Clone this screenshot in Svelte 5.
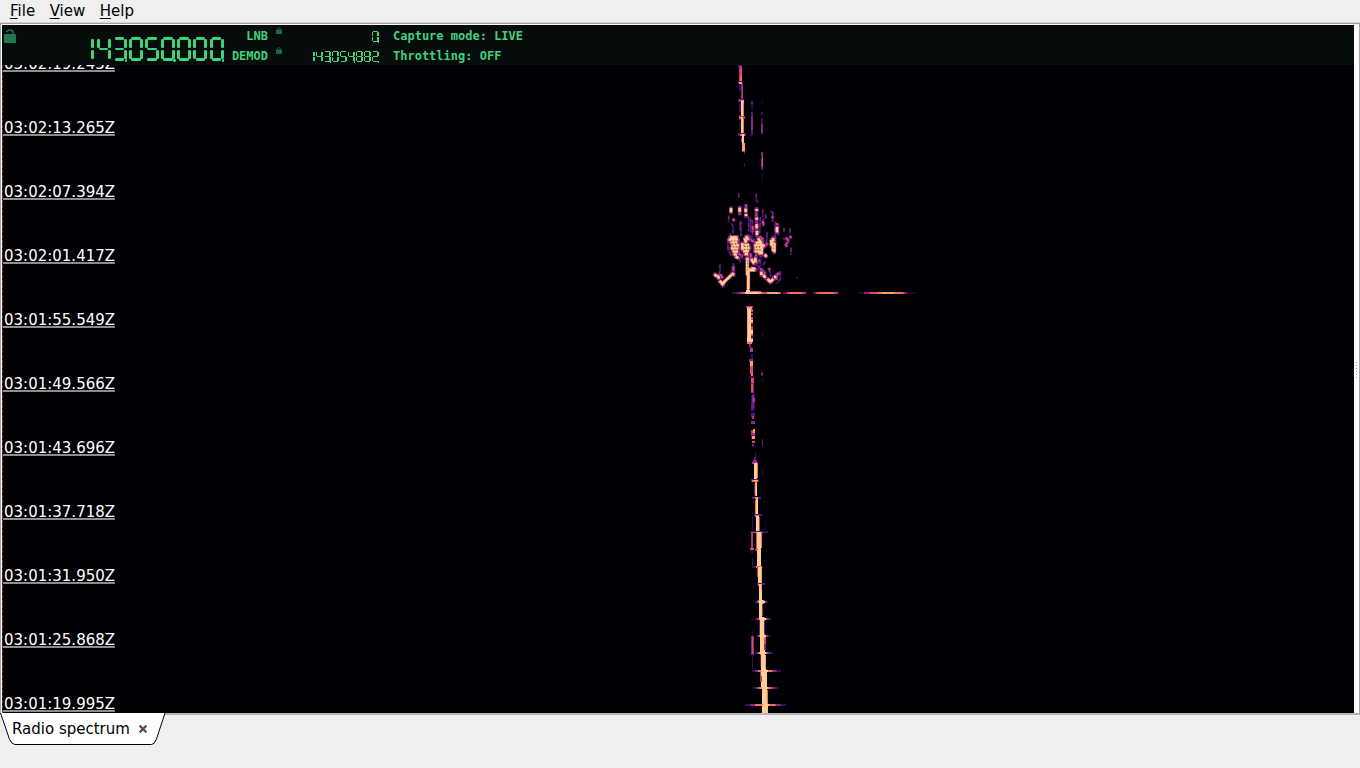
<script>
  const menus = ['File', 'View', 'Help'];
  const stamps = [
    '03:02:19.243Z', '03:02:13.265Z', '03:02:07.394Z', '03:02:01.417Z', '03:01:55.549Z', '03:01:49.566Z',
    '03:01:43.696Z', '03:01:37.718Z', '03:01:31.950Z', '03:01:25.868Z', '03:01:19.995Z'
  ];
  const lit = {
    0: 'abcdef', 1: 'bc', 2: 'abged', 3: 'abgcd', 4: 'fgbc',
    5: 'afgcd', 6: 'afgedc', 7: 'abc', 8: 'abcdefg', 9: 'abcdfg'
  };
  const readouts = { tuner: '143050000', lnb: '0', demod: '143054882' };
  const cells = (value) =>
    [...value].map((d, i) => ({ segs: [...lit[d]], dot: (value.length - 1 - i) % 3 === 0 }));

  // Colour ramp of the waterfall, weakest to strongest signal.
  const ramp = ['#0a0618', '#170b34', '#32105f', '#5b177e', '#862781', '#b5367a', '#de4968', '#f66e5b', '#fe9f6d', '#fecf92'];

  // Signal blocks: x, y, width, height, level.
  const blocks = [
    // head of the trace
    [738,65,3,2,3],[739,66,3,5,5],[739,68,3,14,5],[740,68,2,14,6],[740,76,2,6,7],[738,81,5,3,3],[739,82,3,2,8],
    [739,84,2,7,2],[741,84,2,16,4],[742,86,1,12,5],[738,99,6,3,3],[739,100,4,1,6],
    [739,102,2,10,2],[739,115,2,5,3],[739,121,2,8,1],
    [741,100,3,18,8],[741,101,2,32,9],[743,103,1,30,7],[739,116,6,3,5],[741,117,2,17,9],[739,117,2,1,7],
    [738,133,8,3,3],[740,134,5,2,7],[742,134,2,17,9],[741,138,1,4,5],[742,143,3,8,8],[742,151,3,1,5],[744,152,1,2,3],
    [743,161,1,2,1],[744,163,1,4,2],
    [751,101,2,4,3],[751,105,2,7,1],[751,112,2,6,3],[751,117,2,13,4],[751,130,2,5,3],[750,134,2,2,2],
    [762,101,1,5,1],[761,112,2,3,2],[761,118,2,6,2],[761,124,2,10,4],[762,131,1,4,3],
    [761,152,2,4,4],[762,156,1,11,6],[761,158,1,9,4],[761,167,2,3,3],[762,170,1,12,1],
    // second stretch
    [748,295,1,2,1],[746,306,7,2,5],[747,307,5,2,8],[747,309,4,34,9],[747,310,1,28,8],[751,309,2,32,6],
    [751,312,2,1,1],[751,315,2,2,2],[751,320,2,2,9],[751,324,2,2,2],[751,330,2,4,9],[751,336,2,2,3],[751,339,2,3,9],
    [747,342,5,2,7],[749,344,2,3,4],[750,347,2,5,3],[750,348,3,4,5],[751,354,2,5,2],[749,359,4,3,4],
    [750,361,3,6,8],[750,366,3,8,6],[751,373,2,3,7],[749,376,5,2,2],[751,378,3,5,6],[751,383,3,10,4],[751,384,2,8,6],
    [752,393,3,5,2],[751,395,4,14,2],[752,395,2,14,4],[753,398,2,4,5],[751,403,2,8,3],[753,409,2,4,1],[751,413,4,4,3],[752,416,2,3,5],[751,421,4,3,4],
    [751,430,4,5,5],[753,429,2,4,8],[751,435,4,4,3],[752,436,3,3,8],[752,441,3,2,6],[752,444,2,2,4],[752,446,4,1,2],
    [762,300,1,3,1],[762,331,1,8,1],[762,363,1,2,1],[761,371,2,5,2],[761,373,2,2,4],[762,378,1,4,1],[762,439,1,7,3],[762,468,1,8,1],
    // lower trace
    [755,453,1,4,2],[754,457,2,3,3],[753,460,4,2,4],[752,462,6,2,5],[754,463,3,17,9],[757,464,1,14,7],
    [751,479,8,3,3],[752,480,6,2,7],[754,480,3,1,9],[755,482,2,14,8],[756,486,1,10,9],[754,483,1,12,3],
    [752,497,9,2,3],[755,497,3,2,8],[756,499,2,16,9],[755,500,1,15,7],[754,514,8,2,3],[755,515,4,2,7],
    [756,516,3,16,9],[759,517,1,14,5],[752,517,1,13,2],[750,531,18,2,2],[751,532,12,1,6],[756,532,5,2,9],
    [757,533,4,34,9],[761,533,1,15,7],[756,533,1,18,6],[751,533,2,15,5],[750,548,4,2,6],[755,549,3,1,6],
    [751,550,2,3,2],[752,558,1,9,2],[752,566,11,2,2],[756,566,6,2,7],[758,567,3,17,9],[761,567,1,17,8],[757,567,1,10,5],
    [757,583,8,2,3],[758,584,4,2,7],[759,584,2,17,9],[761,585,1,14,8],[757,600,8,2,4],[759,590,3,28,9],[762,602,1,14,4],
    [751,619,3,1,2],[760,618,4,34,9],[764,620,1,16,3],[759,620,1,16,3],
    [764,637,2,7,6],[764,644,2,6,4],[752,635,1,1,3],[751,636,3,19,4],[752,637,1,17,6],[752,654,1,14,2],[752,630,1,5,1],
    [761,650,4,39,9],[765,655,1,14,8],[760,655,1,12,3],[760,672,2,10,5],[761,672,2,4,9],[762,670,5,20,9],
    [762,688,5,25,9],[767,690,1,15,7],[767,706,1,7,9]
  ];

  // Horizontal bursts crossing the lower trace: centre, y, left reach, right reach.
  const bursts = [
    [761,601,6,7],[762,618,7,9],[762,635,5,8],[762,652,7,11],[764,670,12,17],[764,687,11,15],[765,704,20,21]
  ];

  // The long line at its own instant: x, width, level.
  const line = [
    [732,14,2],[737,9,4],[741,6,6],[745,3,9],[748,14,8],[750,9,9],[762,3,6],[765,16,6],[767,12,8],[783,24,3],
    [787,18,6],[790,11,7],[813,26,3],[816,21,6],[819,14,7],[858,58,1],[864,43,4],[870,34,6],[877,26,7],[882,12,8]
  ];

  // Head echo cluster: traced on a grid three times finer than the canvas.
  const faint = [
    'M116 25v14','M169 25v20l5 8','M86 92v20M94 115l5 10v20','M123 108v45M120 110v24M152 100v42M146 95v44M157 105v46',
    'M188 72v24M190 100v25M181 96l-2 50M197 88v14M211 78l12 8M218 82v28M225 110v44','M252 128v12M270 130v18M249 160l12 4v20M273 188v22',
    'M92 145l-8 20v28l9 20M113 150v70l9 10M148 150l18 16M201 142v22l-8 26M226 176l-6 30M236 118v34',
    'M60 238v18l-4 20M100 234v42','M181 205v40M196 230l-8 12M205 250l8 25M241 258v24l-10 14','M288 278h4M114 218l26 4M160 200l30 18','M157 232l22 14-12 14'
  ];
  const warm = [
    'M92 66v18M99 100l4 9M119 64v27M138 58v40M169 68v34','M218 94v6M231 114v34M170 107v48M158 122v20M187 108l5 12',
    'M257 158l8 8-4 10M256 176l5 10M269 153l5 7','M140 150l12 14 12 8M178 154l10 8v14M204 174l-9 9M187 160l-6 10M214 162l10-4v20l-3 24',
    'M105 153l10 18v34l14 10','M152 205v22l16 8 12-10M168 208v22M142 210v30M179 203l18 10',
    'M44 270l14 5M61 268l8 12M100 244v26M57 286l14 20M180 250l14 12v14l14 14M224 276l8 8M206 250l4 6M206 294l14-16 18-14'
  ];
  const hot = [
    'M93 70v12M119 68v12M137 71v10M138 88v5M170 72v5M170 98v6','M231 126v16M170 118v12M171 138v12',
    'M90 157h22M86 164h28M92 172h20M95 181h22M93 190h22M98 199h16M101 208h9M107 215l8 4',
    'M127 174v20M133 180h14M126 189h23M130 198h16M134 207h10M138 154l7 11M134 160l4 13',
    'M163 181h29M167 173h16M164 190h24M164 199h21M174 160l7 10 4 14v20l-9 1M187 180l7 3',
    'M219 159v38M214 165v17M223 174v28M195 209l4 6','M142 218v52M145 250v62M154 222l8 14M166 232v-14M145 255h20M154 250l12 2',
    'M44 268l6 6M54 272l3 9M59 288l10 8 6-8 10-9 9-9M95 266l7 3M62 290l8 10','M190 270l6 8M184 260v10M203 282l9 10M222 276h7M212 290l8-8'
  ];
</script>

{#snippet number(value, size)}
  <span class="number {size}" role="img" aria-label={value}>
    {#each cells(value) as cell}
      <span class="digit">
        {#each cell.segs as s}<i class={s}></i>{/each}
        {#if cell.dot}<i class="dot"></i>{/if}
      </span>
    {/each}
  </span>
{/snippet}

{#snippet lock(open)}
  <svg class="lock" viewBox="0 0 12 14">
    <rect x="0" y="5" width="12" height="9" rx="0.6" fill="currentColor" />
    <path d={open ? 'M2.5 3.4C3.4 .4 8.6 .2 9.2 3.6V6' : 'M3 6V4C3 .2 9 .2 9 4V6'} fill="none" stroke="currentColor" stroke-width="1.5" />
  </svg>
{/snippet}

<div class="window">
  <nav>
    {#each menus as m}<span><u>{m[0]}</u>{m.slice(1)}</span>{/each}
  </nav>

  <main>
    <section class="view">
      <header>
        {@render lock(true)}
        <div class="tuner">{@render number(readouts.tuner, 'big')}</div>
        <div class="labels"><span>LNB</span><span>DEMOD</span></div>
        <div class="locks">{@render lock(false)}{@render lock(false)}</div>
        <div class="values">
          {@render number(readouts.lnb, 'small')}
          {@render number(readouts.demod, 'small')}
        </div>
        <div class="status"><span>Capture mode: LIVE</span><span>Throttling: OFF</span></div>
      </header>

      <div class="waterfall">
        <svg class="signal" viewBox="2 65 1352 648">
          <g shape-rendering="crispEdges">
            {#each blocks as [x, y, w, h, c]}
              <rect {x} {y} width={w} height={h} fill={ramp[c]} />
            {/each}
          </g>
          {#each bursts as [x, y, l, r]}
            <rect x={x - l} {y} width={l + r} height="2" fill={ramp[2]} />
            <rect x={x - l * 0.75} {y} width={(l + r) * 0.75} height="2" fill={ramp[4]} />
            <rect x={x - l * 0.5} {y} width={(l + r) * 0.5} height="2" fill={ramp[7]} />
            <rect x={x - 2.5} y={y} width="6.5" height="2" fill={ramp[9]} />
            <rect x={x - 1.5} y={y - 1} width="4" height="4" fill={ramp[9]} />
          {/each}
          <g transform="translate(700 185) scale(.33333)" fill="none" stroke-linejoin="round">
            {#each faint as d}<path {d} stroke={ramp[2]} stroke-width="6" /><path {d} stroke={ramp[4]} stroke-width="3" stroke-dasharray="12 7" />{/each}
            {#each warm as d}<path {d} stroke={ramp[3]} stroke-width="11" /><path {d} stroke={ramp[6]} stroke-width="5" stroke-dasharray="14 3" />{/each}
            {#each hot as d}<path {d} stroke={ramp[4]} stroke-width="12" stroke-linecap="round" />{/each}
            {#each hot as d}<path {d} stroke={ramp[7]} stroke-width="9" />{/each}
            {#each hot as d}<path {d} stroke={ramp[9]} stroke-width="7" />{/each}
            <path
              d="M94 168h20M96 177h18M100 186h14M104 195h12M132 184h12M132 193h14M168 186h18M170 195h14M220 170v24M143 226v36M154 236h14"
              stroke="#48152f" stroke-width="2.6" stroke-dasharray="2.6 6.4"
            />
          </g>
          {#each line as [x, w, c]}
            <rect {x} y="292" width={w} height="2" fill={ramp[c]} />
          {/each}
          <rect x="747" y="270" width="2" height="24" fill={ramp[9]} />
          <rect x="746" y="290" width="4" height="3" fill={ramp[9]} />
          <rect x="750" y="291" width="11" height="1" fill={ramp[6]} />
        </svg>
        <div class="stamps">
          {#each stamps as s}<div class="row"><span>{s}</span></div>{/each}
        </div>
      </div>
    </section>
    <div class="grip">{#each Array(6) as _}<b></b>{/each}</div>
  </main>

  <footer>
    <div class="tab">
      <svg class="shape" viewBox="0 0 166 33">
        <path d="M0 0L9.6 26.5Q11.8 31.5 15 31.5H151.5Q154.3 31.5 156.3 26.5L165 0Z" fill="#fff" />
        <path d="M0.5 0L9.6 26.5Q11.8 31.5 15 31.5H151.5Q154.3 31.5 156.3 26.5L165 0" fill="none" stroke="#000" />
      </svg>
      <span>Radio spectrum</span>
      <svg class="close" viewBox="0 0 8 8"><path d="M.6 .6L7.4 7.4M7.4 .6L.6 7.4" stroke="#4b4b4b" stroke-width="2.2" /></svg>
    </div>
  </footer>
</div>

<style>
  :global(body) { background: #efefef; overflow: hidden; }
  .window { width: 1360px; height: 768px; display: flex; flex-direction: column; background: #efefef; color: #000; font: 15px "DejaVu Sans", sans-serif; }
  nav { height: 22px; display: flex; gap: 14.5px; padding-left: 10px; box-sizing: border-box; line-height: 22px; }
  u { text-underline-offset: 2px; text-decoration-thickness: 1px; }
  main { height: 693px; box-sizing: border-box; display: flex; border: 1px solid #a6a6a6; border-top: 1px solid #d2d2d2; border-bottom: 2px solid #b5b5b5; background: #fff; padding: 0 0 0 1px; box-shadow: inset 0 1px #9f9f9f; }
  .view { width: 1352px; margin-top: 2px; display: flex; flex-direction: column; }
  header { height: 40px; display: flex; background: #060c0c; color: #3fd27d; font: bold 12px "DejaVu Sans Mono", monospace; }
  header > .lock { width: 12px; height: 14px; margin: 4px 0 0 2px; color: #24754a; }
  .tuner { width: 207.5px; margin-right: .5px; padding-top: 12px; display: flex; justify-content: flex-end; }
  .labels { width: 44px; display: flex; flex-direction: column; align-items: flex-end; line-height: 20px; padding-top: 1px; }
  .locks { width: 15px; display: flex; flex-direction: column; gap: 13px; padding: 2px 0 0 8px; box-sizing: border-box; color: #1f6a42; }
  .locks .lock { width: 6px; height: 7px; }
  .values { width: 95.5px; margin-right: .5px; display: flex; flex-direction: column; align-items: flex-end; gap: 9px; padding-top: 6px; }
  .status { display: flex; flex-direction: column; line-height: 20px; padding: 1px 0 0 14px; }
  .number { display: flex; }
  .big { gap: 2.15px; }
  .small { gap: 1px; }
  .digit { display: grid; }
  .big .digit { grid-template: 3px 8px 2px 8px 3px / 3px 8px 3px; width: 14px; }
  .small .digit { grid-template: 1px 4px 1px 4px 1px / 1px 5px 1px; width: 7px; }
  .digit i { background: #3fd27d; }
  .big i { border-radius: 1.2px; }
  .big .a, .big .d, .big .g { margin-left: -.8px; margin-right: -.8px; }
  .big .b, .big .f { margin: -1.4px 0 -.4px; }
  .big .c, .big .e { margin: -.4px 0 -1.4px; }
  .small .a { margin-bottom: -.4px; }
  .small .d { margin-top: -.4px; }
  .small .g { margin-bottom: -.3px; }
  .small .b, .small .c { margin-left: -.4px; }
  .small .e, .small .f { margin-right: -.4px; }
  .a { grid-area: 1 / 2; } .b { grid-area: 2 / 3; } .c { grid-area: 4 / 3; } .d { grid-area: 5 / 2; }
  .e { grid-area: 4 / 1; } .f { grid-area: 2 / 1; } .g { grid-area: 3 / 2; }
  .dot { grid-area: 5 / 3; }
  .big .dot { margin: 1px -.5px -1px 1px; }
  .small .dot { margin: 0 0 -1px; }
  .waterfall { position: relative; height: 648px; background: #000004; overflow: hidden; }
  .signal { position: absolute; inset: 0; width: 1352px; height: 648px; }
  .stamps { height: 648px; width: 114px; box-sizing: border-box; padding: 0 0 1px 1px; display: flex; flex-direction: column; justify-content: flex-end; background: repeating-linear-gradient(#8b2c2c 0 3px, #240b0c 3px 5px) left / 1px 100% no-repeat; }
  .row { flex: none; height: 64px; box-sizing: border-box; display: flex; align-items: flex-end; border-bottom: 2px solid #8c8c8e; color: #fff; line-height: 11px; padding-left: 1px; width: 112px; }
  .grip { flex: 1; display: flex; flex-direction: column; gap: 2px; align-items: center; padding-top: 339px; }
  .grip b { width: 1px; height: 1px; background: #999; }
  footer { flex: 1; }
  .tab { position: relative; display: flex; align-items: center; width: 166px; height: 30px; margin-top: -2px; padding-left: 12px; box-sizing: border-box; gap: 9px; padding-top: 2px; }
  .tab span { position: relative; margin-top: -1px; }
  .shape { position: absolute; left: 0; top: 0; width: 166px; height: 33px; }
  .close { position: relative; width: 8px; height: 8px; margin-top: -1px; }
</style>
